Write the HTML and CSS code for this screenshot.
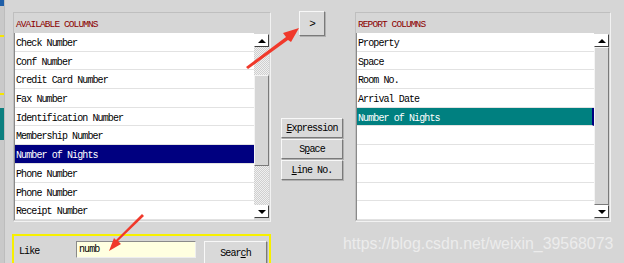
FILE: index.html
```html
<!DOCTYPE html>
<html>
<head>
    <title>Report Columns</title>
    <link rel="stylesheet" href="styles.css">
</head>
<body>
    <div class="screen">
        <!-- Rand des Nachbarfensters -->
        <div class="edge">
            <div class="edge-blue"></div>
            <div class="edge-yellow edge-y1"></div>
            <div class="edge-yellow edge-y2"></div>
            <div class="edge-teal"></div>
        </div>

        <div class="main">
            <div class="top">
                <!-- Verfügbare Spalten -->
                <div class="panel panel-left">
                    <div class="panel-title">AVAILABLE COLUMNS</div>
                    <div class="panel-body">
                        <div class="rows">
                            <div class="row">Check Number</div>
                            <div class="row">Conf Number</div>
                            <div class="row">Credit Card Number</div>
                            <div class="row">Fax Number</div>
                            <div class="row">Identification Number</div>
                            <div class="row">Membership Number</div>
                            <div class="row selected-blue">Number of Nights</div>
                            <div class="row">Phone Number</div>
                            <div class="row">Phone Number</div>
                            <div class="row">Receipt Number</div>
                        </div>
                        <div class="scrollbar">
                            <div class="sb-btn"><span class="tri-up"></span></div>
                            <div class="sb-track sb-dither sb-gap1"></div>
                            <div class="sb-thumb sb-thumb-left"></div>
                            <div class="sb-track sb-dither"></div>
                            <div class="sb-btn"><span class="tri-down"></span></div>
                        </div>
                    </div>
                </div>

                <!-- Buttons in der Mitte -->
                <div class="middle">
                    <button class="btn btn-add">&gt;</button>
                    <div class="btn-stack">
                        <button class="btn btn-wide"><u>E</u>xpression</button>
                        <button class="btn btn-wide">S<u>p</u>ace</button>
                        <button class="btn btn-wide"><u>L</u>ine No.</button>
                    </div>
                </div>

                <!-- Report-Spalten -->
                <div class="panel panel-right">
                    <div class="panel-title">REPORT COLUMNS</div>
                    <div class="panel-body">
                        <div class="rows">
                            <div class="row">Property</div>
                            <div class="row">Space</div>
                            <div class="row">Room No.</div>
                            <div class="row">Arrival Date</div>
                            <div class="row selected-teal">Number of Nights</div>
                            <div class="row"></div>
                            <div class="row"></div>
                            <div class="row"></div>
                            <div class="row"></div>
                            <div class="row"></div>
                        </div>
                        <div class="scrollbar">
                            <div class="sb-btn"><span class="tri-up"></span></div>
                            <div class="sb-thumb sb-thumb-full"></div>
                            <div class="sb-btn"><span class="tri-down"></span></div>
                        </div>
                    </div>
                </div>
            </div>

            <div class="bottom">
                <div class="like-box">
                    <span class="like-label">Like</span>
                    <input class="like-input" type="text" value="numb">
                    <button class="btn btn-search">Sear<u>c</u>h</button>
                </div>
                <div class="watermark">https://blog.csdn.net/weixin_39568073</div>
            </div>
        </div>

        <!-- rote Pfeile aus dem Screenshot -->
        <svg class="arrows" width="624" height="263" viewBox="0 0 624 263">
            <polygon points="246,67 286,37 283,33 299,28 291,42 288,40 248,69" fill="#f0392b"/>
            <polygon points="144,216 118,241 121,244 109,251 114,238 116,240 142,214" fill="#f0392b"/>
        </svg>
    </div>
</body>
</html>
```

FILE: styles.css
```css
body {
    margin: 0;
    background-color: #d6d6d6;
    font-family: "Liberation Mono", monospace;
    font-size: 10px;
    letter-spacing: -0.9px;
    color: #000;
}
.screen {
    position: relative;
    width: 624px;
    height: 263px;
    overflow: hidden;
    display: flex;
}
.edge {
    position: relative;
    width: 4px;
    background-color: #c9c9c9;
    border-right: 1px solid #bdbdbd;
}
.edge-blue {
    height: 6px;
    background-color: #1f5fa8;
}
.edge-yellow {
    position: absolute;
    left: 0;
    width: 4px;
    height: 2px;
    background-color: #f5e600;
}
.edge-y1 { top: 35px; }
.edge-y2 { top: 93px; }
.edge-teal {
    position: absolute;
    left: 0;
    top: 108px;
    width: 4px;
    height: 32px;
    background-color: #0c7f7f;
}
.main {
    flex: 1;
    padding: 12px 0 0 8px;
}
.top {
    display: flex;
    height: 210px;
}
.panel {
    display: flex;
    flex-direction: column;
    border: 1px solid #bfbfbf;
    border-right-color: #f2f2f2;
    border-bottom-color: #f2f2f2;
    background-color: #d6d6d6;
}
.panel-left { width: 256px; }
.panel-right { width: 254px; }
.panel-title {
    height: 20px;
    line-height: 23px;
    padding-left: 2px;
    color: #8b0000;
    font-size: 9.5px;
}
.panel-body {
    display: flex;
    height: 187px;
    border-left: 1px solid #8a8a8a;
}
.rows {
    flex: 1;
    background-color: #fff;
}
.row {
    height: 17.7px;
    line-height: 22px;
    padding-left: 1px;
    border-bottom: 1px solid #e2e2e2;
    white-space: nowrap;
}
.selected-blue {
    background-color: #000080;
    color: #fff;
}
.selected-teal {
    background-color: #008080;
    color: #fff;
    border-right: 2px solid #000080;
}
.scrollbar {
    width: 15px;
    display: flex;
    flex-direction: column;
    padding: 1px 1px 2px 0;
}
.sb-btn {
    height: 13px;
    box-sizing: border-box;
    background-color: #fff;
    border: 1px solid #fff;
    border-right-color: #404040;
    border-bottom-color: #404040;
    display: flex;
    align-items: center;
    justify-content: center;
}
.tri-up {
    border-left: 4px solid transparent;
    border-right: 4px solid transparent;
    border-bottom: 4px solid #000;
}
.tri-down {
    border-left: 4px solid transparent;
    border-right: 4px solid transparent;
    border-top: 4px solid #000;
}
.sb-dither {
    background-color: #e6e6e6;
    background-image: repeating-conic-gradient(#cfcfcf 0 25%, #f0f0f0 0 50%);
    background-size: 2px 2px;
}
.sb-track { flex: 1; }
.sb-gap1 { flex: 0 0 28px; }
.sb-thumb {
    box-sizing: border-box;
    background-color: #d6d6d6;
    border: 1px solid #f4f4f4;
    border-right-color: #7a7a7a;
    border-bottom-color: #7a7a7a;
}
.sb-thumb-left { height: 91px; }
.sb-thumb-full { flex: 1; }
.middle {
    width: 84px;
    display: flex;
    flex-direction: column;
}
.btn {
    font-family: "Liberation Mono", monospace;
    font-size: 10px;
    letter-spacing: -0.9px;
    color: #000;
    background-color: #d9d9d9;
    border: 1px solid #f8f8f8;
    border-right-color: #7a7a7a;
    border-bottom-color: #7a7a7a;
    padding: 0;
    box-shadow: 1px 1px 0 #b0b0b0;
}
.btn u {
    text-underline-offset: 1px;
}
.btn-add {
    width: 26px;
    height: 25px;
    margin: -1px 0 0 28px;
    font-size: 11px;
}
.btn-stack {
    display: flex;
    flex-direction: column;
    gap: 1px;
    margin: 82px 0 0 10px;
}
.btn-wide {
    width: 62px;
    height: 20px;
}
.bottom {
    display: flex;
    align-items: flex-start;
    margin-top: 12px;
}
.like-box {
    width: 255px;
    height: 30px;
    margin-left: -1px;
    border: 2px solid #f7f000;
    border-bottom: none;
    display: flex;
    align-items: flex-start;
    padding-top: 5px;
}
.like-label {
    margin: 5px 0 0 5px;
    width: 57px;
}
.like-input {
    width: 120px;
    height: 17px;
    box-sizing: border-box;
    padding: 0 2px;
    border: 1px solid #8a8a8a;
    border-right-color: #eeeeee;
    border-bottom-color: #eeeeee;
    background-color: #ffffe0;
    font-family: "Liberation Mono", monospace;
    font-size: 10px;
    letter-spacing: -0.9px;
}
.btn-search {
    width: 63px;
    height: 25px;
    margin-left: 8px;
}
.watermark {
    margin: 0 0 0 72px;
    padding-top: 1px;
    font-family: "Liberation Sans", Arial, sans-serif;
    font-size: 15.9px;
    letter-spacing: 0;
    color: #ececec;
    white-space: nowrap;
}
.arrows {
    position: absolute;
    left: 0;
    top: 0;
    pointer-events: none;
}
```
